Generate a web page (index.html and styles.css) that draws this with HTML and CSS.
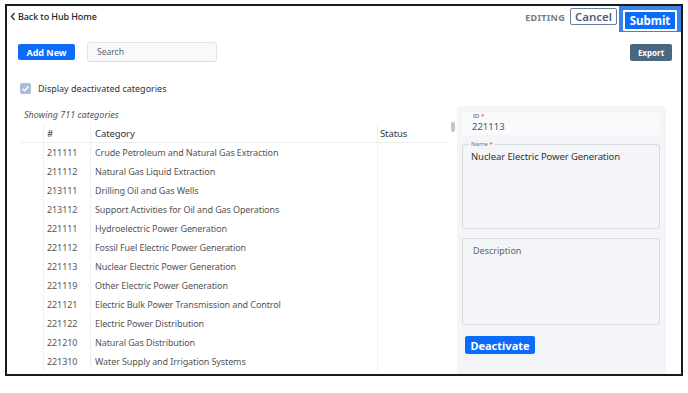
FILE: index.html
```html
<!DOCTYPE html>
<html>
<head>
<meta charset="utf-8">
<link rel="stylesheet" href="styles.css">
</head>
<body>
<div class="frame">
  <div class="topbar">
    <a class="back"><svg class="chev" width="6" height="9" viewBox="0 0 6 9"><path d="M4.5 1 L1.5 4.5 L4.5 8" fill="none" stroke="#333" stroke-width="1.4"/></svg>Back to Hub Home</a>
    <div class="actions">
      <span class="editing">EDITING</span>
      <button class="btn-cancel">Cancel</button>
      <div class="submit-ring"><button class="btn-submit">Submit</button></div>
    </div>
  </div>
  <div class="toolbar">
    <div class="tool-left">
      <button class="btn-add">Add New</button>
      <div class="search">Search</div>
    </div>
    <button class="btn-export">Export</button>
  </div>
  <label class="check-row">
    <span class="checkbox"><svg width="9" height="9" viewBox="0 0 9 9"><path d="M1.5 4.7 L3.6 6.8 L7.6 2.2" fill="none" stroke="#fff" stroke-width="1.4"/></svg></span>
    Display deactivated categories
  </label>
  <div class="main">
    <div class="list">
      <div class="showing">Showing 711 categories</div>
      <div class="table">
        <div class="row head">
          <div class="c0"></div><div class="c1">#</div><div class="c2">Category</div><div class="c3">Status</div>
        </div>
        <div class="row"><div class="c0"></div><div class="c1">211111</div><div class="c2">Crude Petroleum and Natural Gas Extraction</div><div class="c3"></div></div>
        <div class="row"><div class="c0"></div><div class="c1">211112</div><div class="c2">Natural Gas Liquid Extraction</div><div class="c3"></div></div>
        <div class="row"><div class="c0"></div><div class="c1">213111</div><div class="c2">Drilling Oil and Gas Wells</div><div class="c3"></div></div>
        <div class="row"><div class="c0"></div><div class="c1">213112</div><div class="c2">Support Activities for Oil and Gas Operations</div><div class="c3"></div></div>
        <div class="row"><div class="c0"></div><div class="c1">221111</div><div class="c2">Hydroelectric Power Generation</div><div class="c3"></div></div>
        <div class="row"><div class="c0"></div><div class="c1">221112</div><div class="c2">Fossil Fuel Electric Power Generation</div><div class="c3"></div></div>
        <div class="row"><div class="c0"></div><div class="c1">221113</div><div class="c2">Nuclear Electric Power Generation</div><div class="c3"></div></div>
        <div class="row"><div class="c0"></div><div class="c1">221119</div><div class="c2">Other Electric Power Generation</div><div class="c3"></div></div>
        <div class="row"><div class="c0"></div><div class="c1">221121</div><div class="c2">Electric Bulk Power Transmission and Control</div><div class="c3"></div></div>
        <div class="row"><div class="c0"></div><div class="c1">221122</div><div class="c2">Electric Power Distribution</div><div class="c3"></div></div>
        <div class="row"><div class="c0"></div><div class="c1">221210</div><div class="c2">Natural Gas Distribution</div><div class="c3"></div></div>
        <div class="row"><div class="c0"></div><div class="c1">221310</div><div class="c2">Water Supply and Irrigation Systems</div><div class="c3"></div></div>
      </div>
    </div>
    <div class="scroll"><div class="thumb"></div></div>
    <div class="panel">
      <div class="field-id">
        <div class="small-label">ID <span class="req">*</span></div>
        <div class="id-val">221113</div>
      </div>
      <div class="field-name">
        <span class="legend">Name <span class="req">*</span></span>
        <div class="name-val">Nuclear Electric Power Generation</div>
      </div>
      <div class="field-desc">Description</div>
      <button class="btn-deact">Deactivate</button>
    </div>
  </div>
</div>
</body>
</html>
```

FILE: styles.css
```css
* { box-sizing: border-box; }
html, body { margin: 0; padding: 0; background: #fff; }
body { font-family: "Noto Sans", "Open Sans", sans-serif; color: #333; }

.frame {
  margin: 4px 0 0 5px;
  width: 678px;
  height: 372px;
  border: 2px solid #1a1a1a;
  overflow: hidden;
  display: flex;
  flex-direction: column;
}

.topbar {
  height: 26px;
  display: flex;
  justify-content: space-between;
  align-items: flex-start;
}
.back {
  margin: 4px 0 0 3px;
  font-size: 9px;
  font-weight: 500;
  color: #222;
  display: flex;
  align-items: center;
  gap: 1px;
  letter-spacing: -0.1px;
}
.chev { margin-right: 1px; }
.actions { display: flex; align-items: flex-start; }
.editing {
  margin-top: 5px;
  font-family: "Noto Sans", sans-serif;
  font-size: 9px;
  font-weight: 700;
  color: #7a7a7a;
  letter-spacing: 0.3px;
}
.btn-cancel {
  margin: 2px 0 0 5px;
  height: 17px;
  width: 47px;
  padding: 0;
  border: 1.5px solid #6b819a;
  border-radius: 2px;
  background: #fff;
  color: #4d6178;
  font-family: inherit;
  font-size: 11.5px;
  font-weight: 600;
  line-height: 13px;
}
.submit-ring {
  margin-left: 2px;
  width: 62px;
  height: 26px;
  background: #3a83e6;
  padding: 2px 4px 0 4px;
}
.btn-submit {
  width: 54px;
  height: 21px;
  border: 2px solid #fff;
  border-radius: 1px;
  background: #0b6cfb;
  color: #fff;
  font-family: inherit;
  font-size: 11.5px;
  font-weight: 700;
  padding: 0;
  line-height: 15px;
}

.toolbar {
  margin-top: 10px;
  padding: 0 9px 0 11px;
  height: 20px;
  display: flex;
  justify-content: space-between;
  align-items: center;
}
.tool-left { display: flex; align-items: center; gap: 12px; }
.btn-add {
  width: 57px;
  height: 16px;
  border: none;
  border-radius: 2px;
  background: #0b6cfb;
  color: #fff;
  font-family: inherit;
  font-size: 9px;
  font-weight: 700;
  padding: 0;
}
.search {
  width: 130px;
  height: 20px;
  border: 1px solid #e4e6ea;
  border-bottom-color: #d9dce1;
  border-radius: 3px;
  background: #f8f9fa;
  color: #666;
  font-size: 8.5px;
  line-height: 18px;
  padding-left: 9px;
}
.btn-export {
  width: 42px;
  height: 17px;
  border: none;
  border-radius: 2px;
  background: #4b6680;
  color: #fff;
  font-family: inherit;
  font-size: 8px;
  font-weight: 700;
  padding: 0;
}

.check-row {
  margin-top: 20px;
  padding-left: 13px;
  height: 12px;
  display: flex;
  align-items: center;
  gap: 7px;
  font-size: 9px;
  color: #333;
}
.checkbox {
  width: 11px;
  height: 11px;
  border-radius: 2px;
  background: #a7bdd8;
  display: flex;
  align-items: center;
  justify-content: center;
}

.main {
  margin-top: 12px;
  display: flex;
  align-items: flex-start;
  flex: 1;
}
.list { margin-left: 13px; width: 428px; }
.showing {
  height: 18px;
  padding: 2px 0 0 4px;
  font-size: 9px;
  font-style: italic;
  color: #555;
}
.table { font-size: 9px; color: #555; letter-spacing: -0.1px; }
.row {
  display: grid;
  grid-template-columns: 23px 47px 287px 71px;
  height: 19px;
  align-items: stretch;
}
.row > div { display: flex; align-items: center; }
.c1, .c2, .c3 { border-left: 1px solid #f0f0f0; }
.c1 { padding-left: 3px; }
.c2 { padding-left: 4px; }
.c3 { padding-left: 2px; }
.row.head {
  height: 19px;
  border-bottom: 1px solid #eeeeee;
  color: #333;
  font-size: 9.5px;
}
.row.head > div { padding-top: 1px; }

.scroll { width: 9px; margin-top: 16px; display: flex; justify-content: center; }
.thumb { width: 4px; height: 10px; border-radius: 2px; background: #c4c4c4; }

.panel {
  width: 209px;
  height: 300px;
  background: #f4f5f8;
  border-radius: 3px;
  padding: 6px 6px 0 5px;
  display: flex;
  flex-direction: column;
}
.field-id {
  height: 23px;
  background: #f9fafb;
  border-radius: 2px;
  padding: 0 0 0 10px;
}
.small-label { font-size: 6px; color: #555; line-height: 7px; padding-top: 1px; padding-left: 1px; }
.req { color: #d33; }
.id-val { font-size: 9.5px; color: #555; line-height: 13px; }
.field-name {
  position: relative;
  margin-top: 9px;
  height: 85px;
  border: 1px solid #d8dadf;
  border-radius: 3px;
  padding: 5px 8px;
}
.legend {
  position: absolute;
  top: -4px;
  left: 6px;
  padding: 0 2px;
  background: #f4f5f8;
  font-size: 6px;
  line-height: 7px;
  color: #777;
}
.name-val { font-size: 9.5px; color: #333; letter-spacing: -0.1px; }
.field-desc {
  margin-top: 9px;
  height: 87px;
  border: 1px solid #d8dadf;
  border-radius: 3px;
  padding: 5px 10px;
  font-size: 9px;
  color: #666;
}
.btn-deact {
  margin: 11px 0 0 3px;
  width: 70px;
  height: 18px;
  border: none;
  border-radius: 2px;
  background: #0b6cfb;
  color: #fff;
  font-family: inherit;
  font-size: 11px;
  font-weight: 700;
  padding: 0;
  align-self: flex-start;
}
```
